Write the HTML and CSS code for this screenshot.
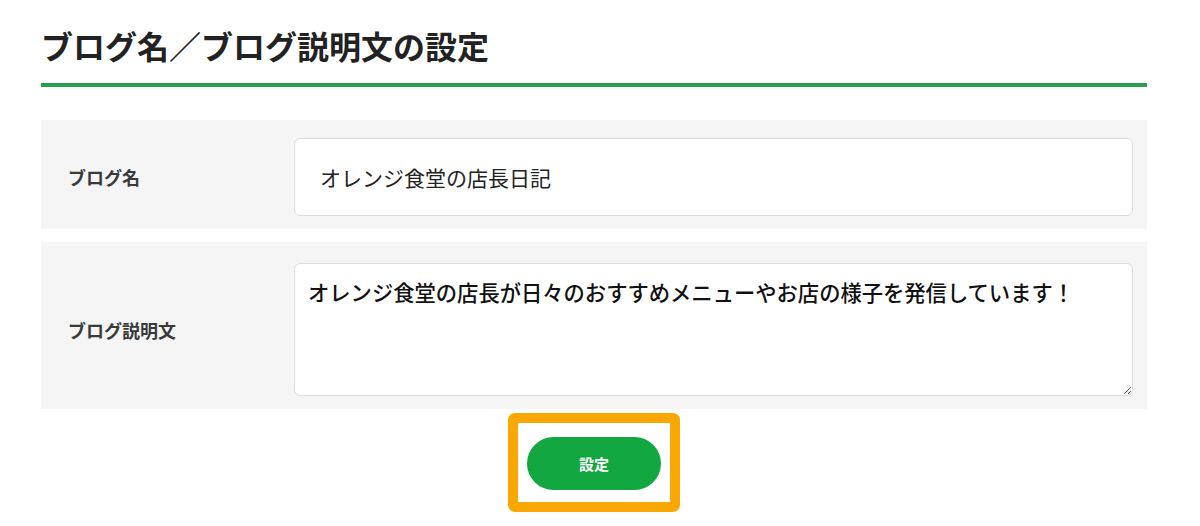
FILE: index.html
```html
<!DOCTYPE html>
<html lang="ja">
<head>
    <meta charset="UTF-8">
    <meta name="viewport" content="width=device-width, initial-scale=1.0">
    <title>ブログ名／ブログ説明文の設定</title>
    <link rel="stylesheet" href="styles.css">
</head>
<body>
    <div class="container">
        <h1 class="page-title">ブログ名／ブログ説明文の設定</h1>
        <form class="settings-form">
            <div class="form-row">
                <label class="form-label" for="blog-name">ブログ名</label>
                <div class="form-field">
                    <input type="text" id="blog-name" name="blog-name" value="オレンジ食堂の店長日記">
                </div>
            </div>

            <div class="form-row">
                <label class="form-label" for="blog-desc">ブログ説明文</label>
                <div class="form-field">
                    <textarea id="blog-desc" name="blog-desc">オレンジ食堂の店長が日々のおすすめメニューやお店の様子を発信しています！</textarea>
                </div>
            </div>

            <div class="form-actions">
                <div class="highlight">
                    <button type="submit">設定</button>
                </div>
            </div>
        </form>
    </div>
</body>
</html>
```

FILE: styles.css
```css
body {
    font-family: "Noto Sans CJK JP", "Noto Sans", sans-serif;
    margin: 0;
    padding: 0;
    background-color: #fff;
    color: #222;
}
.container {
    width: 1106px;
    margin-left: 41px;
    padding-top: 24px;
}
.page-title {
    margin: 0;
    font-size: 32px;
    line-height: 42px;
    font-weight: bold;
    color: #222;
    padding-bottom: 17px;
    border-bottom: 4px solid #25a04c;
}
.settings-form {
    margin-top: 33px;
    display: flex;
    flex-direction: column;
    gap: 13px;
}
.form-row {
    display: flex;
    align-items: center;
    background-color: #f5f5f5;
    padding: 18px 14px 13px 0;
}
.form-row + .form-row {
    padding-top: 21px;
}
.form-label {
    width: 253px;
    padding-left: 27px;
    box-sizing: border-box;
    font-size: 18px;
    font-weight: bold;
    color: #3a3a3a;
}
.form-field {
    flex: 1;
}
input, textarea {
    display: block;
    width: 100%;
    box-sizing: border-box;
    border: 1px solid #dcdcdc;
    border-radius: 6px;
    background-color: #fff;
    font-family: inherit;
    font-size: 21px;
    color: #222;
}
input {
    height: 78px;
    padding: 0 25px;
}
textarea {
    height: 133px;
    padding: 12px 13px;
    font-size: 21.3px;
    line-height: 1.5;
    font-weight: 500;
    color: #111;
}
.form-actions {
    display: flex;
    justify-content: center;
    margin-top: -9px;
}
.highlight {
    border: 10px solid #f9a703;
    border-radius: 7px;
    padding: 14px 9px 12px;
}
button {
    display: block;
    width: 134px;
    height: 53px;
    border: none;
    border-radius: 27px;
    background-color: #12a740;
    color: #fff;
    font-family: inherit;
    font-size: 15px;
    font-weight: bold;
    cursor: pointer;
}
```
